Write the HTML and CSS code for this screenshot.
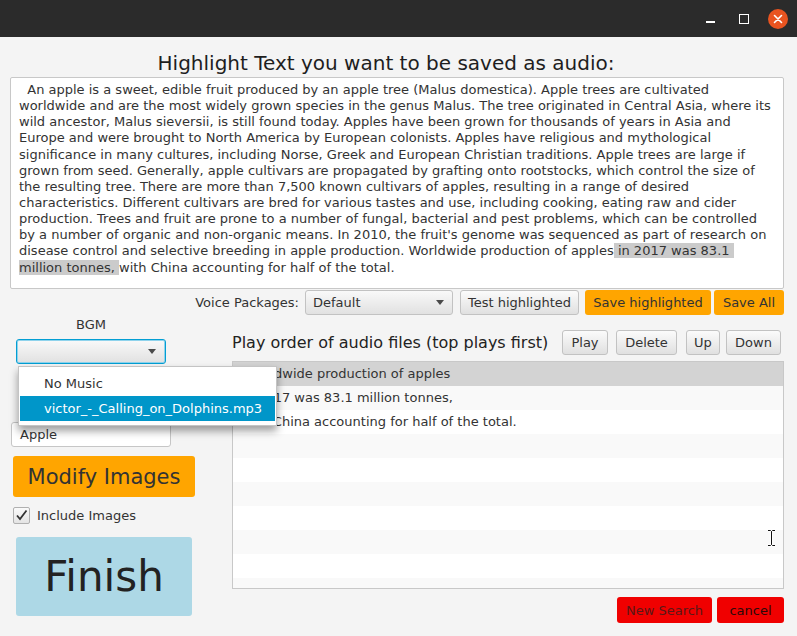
FILE: index.html
```html
<!DOCTYPE html>
<html>
<head>
<meta charset="utf-8">
<link rel="stylesheet" href="styles.css">
</head>
<body>
<div class="window">
  <div class="titlebar">
    <div class="wc wc-min"><span></span></div>
    <div class="wc wc-max"><span></span></div>
    <div class="wc wc-close">
      <svg width="20" height="20" viewBox="0 0 20 20"><circle cx="10" cy="10" r="10" fill="#e95420"/><path d="M6.5 6.5 L13.5 13.5 M13.5 6.5 L6.5 13.5" stroke="#fff" stroke-width="1.6" stroke-linecap="round"/></svg>
    </div>
  </div>
  <main class="content">
    <h1 class="heading">Highlight Text you want to be saved as audio:</h1>
    <div class="textarea">
      <div class="line">  An apple is a sweet, edible fruit produced by an apple tree (Malus domestica). Apple trees are cultivated</div>
      <div class="line">worldwide and are the most widely grown species in the genus Malus. The tree originated in Central Asia, where its</div>
      <div class="line">wild ancestor, Malus sieversii, is still found today. Apples have been grown for thousands of years in Asia and</div>
      <div class="line">Europe and were brought to North America by European colonists. Apples have religious and mythological</div>
      <div class="line">significance in many cultures, including Norse, Greek and European Christian traditions. Apple trees are large if</div>
      <div class="line">grown from seed. Generally, apple cultivars are propagated by grafting onto rootstocks, which control the size of</div>
      <div class="line">the resulting tree. There are more than 7,500 known cultivars of apples, resulting in a range of desired</div>
      <div class="line">characteristics. Different cultivars are bred for various tastes and use, including cooking, eating raw and cider</div>
      <div class="line">production. Trees and fruit are prone to a number of fungal, bacterial and pest problems, which can be controlled</div>
      <div class="line">by a number of organic and non-organic means. In 2010, the fruit's genome was sequenced as part of research on</div>
      <div class="line">disease control and selective breeding in apple production. Worldwide production of apples<span class="sel"> in 2017 was 83.1 </span></div>
      <div class="line"><span class="sel">million tonnes, </span>with China accounting for half of the total.</div>
    </div>
    <div class="toolbar">
      <span class="tb-label">Voice Packages:</span>
      <div class="combo combo-voice"><span>Default</span><i class="arrow"></i></div>
      <button class="btn btn-test">Test highlighted</button>
      <button class="btn btn-orange btn-savehl">Save highlighted</button>
      <button class="btn btn-orange btn-saveall">Save All</button>
    </div>
    <div class="lower">
      <div class="left">
        <div class="bgm">
          <div class="bgm-label">BGM</div>
          <div class="combo combo-bgm"><span></span><i class="arrow"></i></div>
        </div>
        <div class="textfield">Apple</div>
        <button class="btn-modify">Modify Images</button>
        <label class="check">
          <span class="box"><svg width="15" height="15" viewBox="0 0 15 15"><path d="M3 7.5 L6 11 L12.5 2.5" fill="none" stroke="#333" stroke-width="1.8"/></svg></span>
          <span>Include Images</span>
        </label>
        <button class="btn-finish">Finish</button>
      </div>
      <div class="right">
        <div class="play-header">
          <span class="play-title">Play order of audio files (top plays first)</span>
          <div class="play-buttons">
            <button class="btn btn-play">Play</button>
            <button class="btn btn-delete">Delete</button>
            <button class="btn btn-up">Up</button>
            <button class="btn btn-down">Down</button>
          </div>
        </div>
        <div class="list">
          <div class="row selected first">Worldwide production of apples</div>
          <div class="row odd"> in 2017 was 83.1 million tonnes,</div>
          <div class="row"> with China accounting for half of the total.</div>
          <div class="row odd"></div>
          <div class="row"></div>
          <div class="row odd"></div>
          <div class="row"></div>
          <div class="row odd"></div>
          <div class="row"></div>
          <div class="row odd"></div>
        </div>
        <div class="bottom-buttons">
          <button class="btn-red btn-new">New Search</button>
          <button class="btn-red btn-cancel">cancel</button>
        </div>
      </div>
    </div>
  </main>
  <div class="popup">
    <div class="popup-item">No Music</div>
    <div class="popup-item active">victor_-_Calling_on_Dolphins.mp3</div>
  </div>
  <svg class="ibeam" width="9" height="18" viewBox="0 0 9 18"><path d="M1 1.5 H3.5 L4.5 2.5 L5.5 1.5 H8 M4.5 2.5 V15.5 M1 16.5 H3.5 L4.5 15.5 L5.5 16.5 H8" fill="none" stroke="#fff" stroke-width="2.6"/><path d="M1 1.5 H3.5 L4.5 2.5 L5.5 1.5 H8 M4.5 2.5 V15.5 M1 16.5 H3.5 L4.5 15.5 L5.5 16.5 H8" fill="none" stroke="#111" stroke-width="1"/></svg>
</div>
</body>
</html>
```

FILE: styles.css
```css
* { box-sizing: border-box; }
html, body { margin: 0; padding: 0; }
body { background: #f4f4f4; }

.window {
  width: 797px;
  height: 636px;
  position: relative;
  overflow: hidden;
  background: #f4f4f4;
  font-family: "DejaVu Sans", sans-serif;
  font-size: 13px;
  color: #333;
}

.titlebar {
  height: 37px;
  background: #2b2b2b;
  display: flex;
  justify-content: flex-end;
  align-items: center;
  padding-right: 8px;
}
.wc { width: 22px; height: 22px; display: flex; align-items: center; justify-content: center; }
.wc-min { margin-right: 12px; }
.wc-min span { display: block; width: 9px; height: 2px; background: #fff; margin-top: 6px; }
.wc-max { margin-right: 12px; }
.wc-max span { display: block; width: 10px; height: 10px; border: 1.5px solid #fff; }
.wc-close svg { display: block; }

.content {
  padding: 0 13px 0 10px;
}

.heading {
  margin: 0;
  height: 40px;
  padding-top: 14px;
  padding-right: 22px;
  font-size: 20px;
  line-height: 24px;
  font-weight: normal;
  text-align: center;
  color: #1e1e1e;
}

.textarea {
  height: 212px;
  background: #fff;
  border: 1px solid #c8c8c8;
  border-radius: 2px;
  padding: 4px 8px 0 8px;
  overflow: hidden;
}
.line {
  white-space: pre;
  line-height: 16.15px;
  height: 16.15px;
  color: #333;
}
.sel { background: #cbcbcb; }

.toolbar {
  margin-top: 1px;
  height: 25px;
  display: flex;
  justify-content: flex-end;
  align-items: center;
}
.tb-label { margin-right: 6px; }

.combo {
  height: 25px;
  border: 1px solid #c2c2c2;
  border-radius: 3px;
  background: linear-gradient(#f9f9f9, #e1e1e1);
  display: flex;
  align-items: center;
  justify-content: space-between;
  padding: 0 8px 0 7px;
  position: relative;
}
.arrow {
  display: block;
  width: 0; height: 0;
  border-left: 4px solid transparent;
  border-right: 4px solid transparent;
  border-top: 5px solid #4a4a4a;
}
.combo-voice { width: 148px; margin-right: 7px; }

.btn {
  height: 25px;
  border: 1px solid #c2c2c2;
  border-radius: 3px;
  background: linear-gradient(#fbfbfb, #e0e0e0);
  font-family: "DejaVu Sans", sans-serif;
  font-size: 13px;
  color: #333;
  padding: 0;
  display: inline-flex;
  align-items: center;
  justify-content: center;
}
.btn-test { width: 119px; margin-right: 6px; }
.btn-orange { background: #ffa500; border: none; }
.btn-savehl { width: 126px; margin-right: 3px; }
.btn-saveall { width: 70px; }

.lower {
  display: flex;
}
.left {
  width: 222px;
  flex: none;
  position: relative;
}
.right {
  flex: 1;
  padding-top: 15px;
}

.bgm { width: 150px; margin-left: 6px; }
.bgm-label { height: 17px; margin-top: 1px; line-height: 17px; text-align: center; }
.combo-bgm {
  margin-top: 6px;
  border: 1px solid #039ed3;
  box-shadow: inset 0 0 0 1px #8fd3ec;
  padding-right: 9px;
}

.textfield {
  margin: 58px 0 0 1px;
  width: 160px;
  height: 25px;
  background: #fff;
  border: 1px solid #c6c6c6;
  border-radius: 3px;
  padding-left: 8px;
  line-height: 23px;
}

.btn-modify {
  margin: 9px 0 0 3px;
  width: 182px;
  height: 41px;
  border: none;
  border-radius: 3px;
  background: #ffa500;
  font-family: "DejaVu Sans", sans-serif;
  font-size: 21px;
  color: #333;
  padding: 0;
  display: block;
}

.check {
  margin: 9px 0 0 3px;
  display: flex;
  align-items: center;
  height: 18px;
}
.box {
  width: 17px; height: 17px;
  border: 1px solid #b0b0b0;
  border-radius: 2px;
  background: linear-gradient(#fafafa, #e4e4e4);
  display: flex; align-items: center; justify-content: center;
  margin-right: 7px;
}
.box svg { display: block; }

.btn-finish {
  margin: 13px 0 0 6px;
  width: 176px;
  height: 79px;
  border: none;
  border-radius: 3px;
  background: #add8e6;
  font-family: "DejaVu Sans", sans-serif;
  font-size: 42px;
  color: #222;
  padding: 0;
  display: block;
}

.play-header {
  height: 25px;
  display: flex;
  align-items: center;
}
.play-title { font-size: 16px; color: #222; }
.play-buttons { margin-left: auto; display: flex; padding-right: 3px; }
.btn-play { width: 46px; margin-right: 8px; }
.btn-delete { width: 61px; margin-right: 9px; }
.btn-up { width: 34px; margin-right: 6px; }
.btn-down { width: 55px; }

.list {
  margin-top: 6px;
  height: 228px;
  border: 1px solid #c8c8c8;
  background: #fff;
  overflow: hidden;
}
.row {
  height: 24px;
  line-height: 24px;
  padding-left: 4px;
  white-space: pre;
  background: #fff;
}
.row.first { padding-left: 12px; }
.row.odd { background: #f9f9f9; }
.row.selected { background: #d3d3d3; }

.bottom-buttons {
  margin-top: 8px;
  display: flex;
  justify-content: flex-end;
}
.btn-red {
  height: 26px;
  border: none;
  border-radius: 3px;
  background: #f00000;
  font-family: "DejaVu Sans", sans-serif;
  font-size: 13px;
  padding: 0;
}
.btn-new { width: 95px; margin-right: 5px; color: #5a1818; }
.btn-cancel { width: 67px; color: #2a0a0a; }

.popup {
  position: absolute;
  left: 18px;
  top: 366px;
  width: 259px;
  height: 60px;
  background: #fff;
  border: 1px solid #c4c4c4;
  box-shadow: 0 5px 8px rgba(0,0,0,0.38);
  padding: 4px 1px 2px 1px;
}
.popup-item {
  height: 25px;
  line-height: 25px;
  padding-left: 24px;
  color: #333;
}
.popup-item.active { background: #0096c9; color: #fff; }

.ibeam {
  position: absolute;
  left: 767px;
  top: 529px;
}
```
